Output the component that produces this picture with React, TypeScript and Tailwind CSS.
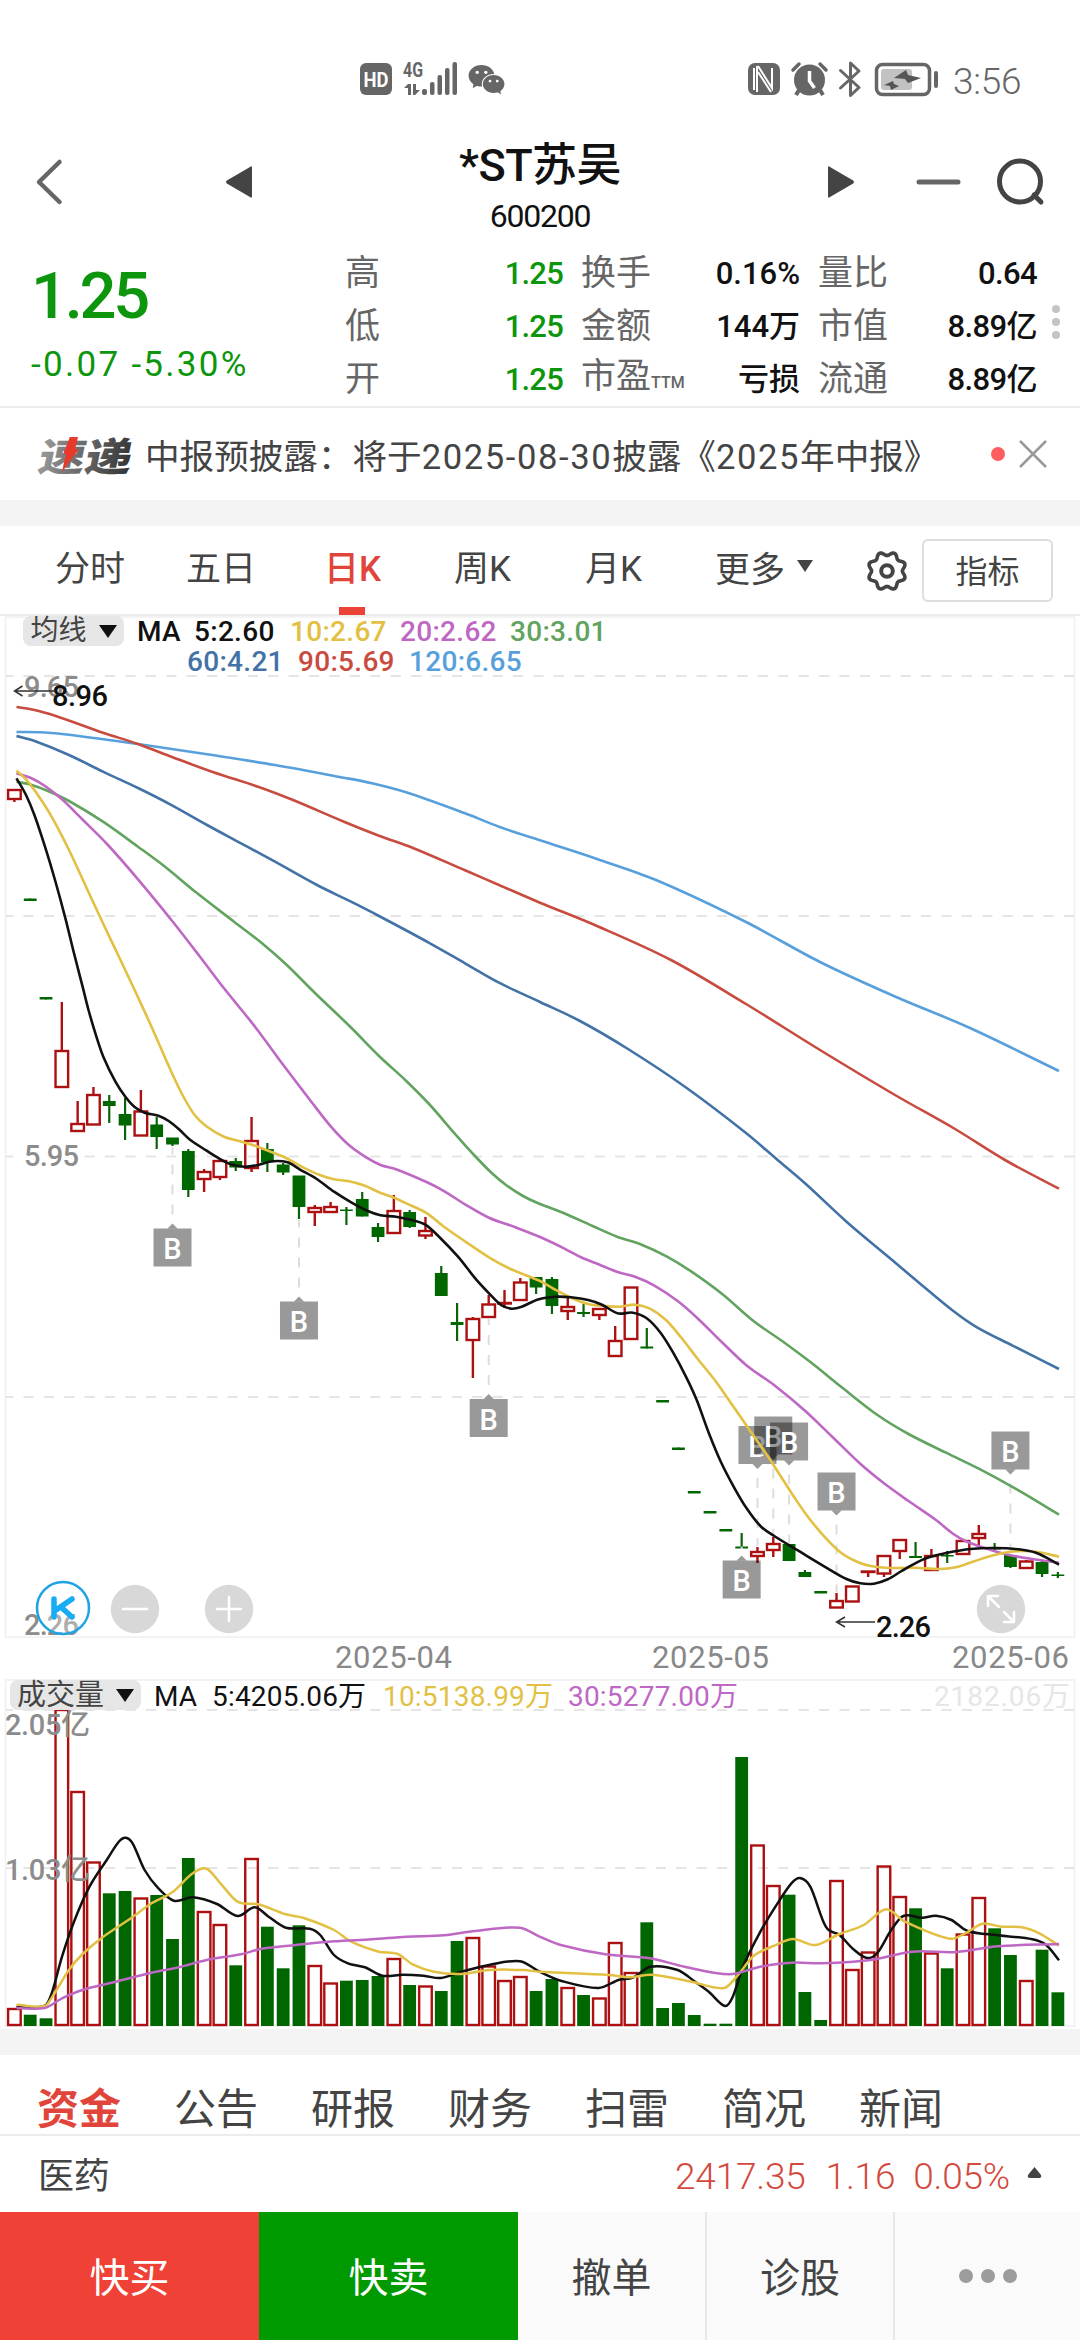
import React from 'react';
import { AiFillWechat } from 'react-icons/ai';

type Point = [number, number];
// [rising, high, bodyTop, bodyBottom, low]
type Candle = [boolean, number, number, number, number];

const STEP = 15.81;
const FIRST_X = 14.4;
const VOLUME_BOTTOM = 2026;

const centerX = (index: number) => FIRST_X + index * STEP;

const candles: Candle[] = [
  [true, 790, 790, 799, 802], [false, 898.5, 898.5, 901, 901], [false, 997, 997, 999.5, 999.5], [true, 1002, 1051, 1087, 1087],
  [true, 1101, 1124, 1131, 1131], [true, 1087, 1095, 1124.5, 1125], [false, 1095, 1101, 1106, 1123], [false, 1098, 1114, 1125.5, 1140],
  [true, 1090, 1111.5, 1135.5, 1136], [false, 1117, 1124.5, 1137, 1149], [false, 1138, 1137.5, 1144.5, 1146], [false, 1149, 1151, 1190, 1197],
  [true, 1169, 1172, 1179, 1192], [true, 1158, 1161, 1177, 1180], [false, 1158, 1161, 1167.5, 1171], [true, 1117, 1141, 1168, 1172],
  [false, 1143, 1149, 1162.5, 1172], [false, 1163, 1164.5, 1172.5, 1175], [false, 1176, 1175.5, 1207, 1219], [true, 1205, 1208, 1212, 1226],
  [true, 1202, 1207, 1212, 1213], [false, 1207, 1209.5, 1211, 1225], [false, 1192, 1199, 1216.5, 1216.5], [false, 1223, 1227, 1237, 1242],
  [true, 1195, 1211, 1233, 1233], [false, 1210, 1212, 1227, 1228], [true, 1217, 1231, 1235.5, 1239], [false, 1266, 1273, 1296, 1296],
  [false, 1303, 1322, 1325, 1341], [true, 1317, 1319, 1340, 1378], [true, 1295, 1304.5, 1317, 1317], [true, 1290, 1303, 1303.5, 1308],
  [true, 1278, 1282.5, 1300, 1300], [false, 1277, 1277, 1287.5, 1294], [false, 1277, 1279, 1306, 1314], [true, 1298, 1307, 1311, 1320],
  [false, 1304, 1312, 1314, 1317], [true, 1308, 1309, 1315, 1320], [true, 1326, 1341, 1356, 1356], [true, 1287, 1287.5, 1339, 1339],
  [false, 1328, 1346.5, 1348.5, 1348.5], [false, 1400, 1400, 1402.5, 1402], [false, 1447.5, 1447.5, 1450, 1450], [false, 1491, 1491, 1493.5, 1493],
  [false, 1511, 1511, 1513.5, 1513], [false, 1529, 1529, 1531.5, 1531], [false, 1533, 1546.5, 1548.5, 1548], [true, 1547, 1552, 1556, 1563],
  [true, 1537, 1544, 1550, 1557], [false, 1544, 1544, 1561, 1561], [false, 1570, 1572, 1577, 1577], [false, 1591, 1591, 1593.5, 1593],
  [true, 1593, 1601, 1607.5, 1608], [true, 1586, 1586.5, 1601.5, 1601], [true, 1571, 1571.5, 1572, 1577], [true, 1556, 1556, 1573.5, 1577],
  [true, 1540, 1540, 1551, 1559], [false, 1542, 1556, 1558, 1558], [true, 1549, 1556, 1570, 1570], [false, 1551, 1555, 1556.5, 1563],
  [true, 1541, 1541, 1554, 1554], [true, 1525, 1534, 1538, 1545], [false, 1543, 1547.5, 1549.5, 1550], [false, 1555, 1555, 1567, 1568],
  [true, 1560, 1561.5, 1568, 1568], [false, 1561, 1562, 1574, 1577], [false, 1572, 1574.5, 1576, 1578]
];

const volumeTops = [
  2009, 2014.7, 2018.3, 1710, 1792, 1862.5, 1893.3, 1891, 1898.5, 1895, 1939, 1858, 1912, 1925, 1965.3, 1859, 1926.7, 1968.3, 1925.3,
  1966, 1983.5, 1980.7, 1980, 1976, 1959, 1985, 1986.5, 1991, 1941, 1938, 1966.5, 1981, 1977, 1991, 1979, 1988, 1995, 1998.5, 1943,
  1973, 1922.3, 2008, 2003, 2015, 2023.7, 2023.7, 1757, 1845.5, 1886, 1894.7, 1992, 2020, 1881, 1970, 1952.5, 1866.5, 1897, 1908.3,
  1953.5, 1968.3, 1934.5, 1898, 1928.3, 1955, 1981, 1949.7, 1992.3
];

const priceLines: { color: string; points: Point[] }[] = [
  {
    color: '#58a0dc',
    points: [[16.5, 732], [41, 732.3], [69, 734.7], [138, 744], [207, 754.3], [275, 765], [344, 777.7], [372, 783.3], [406, 792.3], [465, 813.3], [499, 826.7], [540, 840.3], [597, 859], [656, 880], [746, 922], [820, 962], [895, 996.5], [970, 1028], [1059, 1071]]
  },
  {
    color: '#c84b40',
    points: [[16.5, 707], [31, 709.3], [55, 715.7], [103, 732.7], [138, 744], [172, 757], [213.5, 772.3], [258, 786.7], [293, 800], [344, 821.7], [379, 835.7], [413, 848], [465, 870.3], [499, 885], [540, 902.7], [597, 926], [671, 960], [746, 1004], [820, 1050], [895, 1095], [955, 1129], [1005, 1160], [1059, 1188.7]]
  },
  {
    color: '#4272a6',
    points: [[16.5, 736], [34, 740.7], [69, 755], [103, 771.7], [138, 788], [172, 805.3], [207, 825], [241, 843.3], [275, 861.7], [317, 885], [351, 901.7], [379, 916], [430, 943.3], [465, 963.3], [499, 982.7], [540, 1002], [580, 1021], [628, 1049], [686, 1087.5], [746, 1133], [777.6, 1160], [805, 1183.3], [846.5, 1221.7], [884, 1253.3], [919, 1282.7], [953, 1310.7], [977, 1327.3], [1012, 1345.3], [1059, 1369]]
  },
  {
    color: '#61a35f',
    points: [[16.5, 781.7], [31, 784.7], [48, 791], [69, 801], [103, 821.7], [138, 846.7], [165, 866.7], [196, 892.3], [234, 921.7], [262, 943.3], [286, 964.3], [317, 995], [351, 1027.5], [379, 1056], [406, 1080.7], [430, 1105], [454.5, 1133.3], [475, 1156], [492, 1173.3], [506, 1185], [523, 1196], [540, 1204], [561, 1212], [592, 1225.7], [617, 1236.7], [640, 1244], [667, 1256.7], [691.5, 1271.7], [722.5, 1294.3], [753.5, 1321], [784.5, 1342.7], [812, 1363.3], [843, 1388.3], [877.5, 1415], [908.5, 1434], [946, 1452.7], [984, 1471.3], [1019, 1490.7], [1059, 1514.7]]
  },
  {
    color: '#be68c4',
    points: [[16.5, 773.3], [31, 778], [45, 786], [62, 799.3], [83, 820], [107, 844], [138, 879.3], [172, 920.7], [200, 956.7], [224, 988.3], [255, 1026.7], [282, 1063.3], [310, 1100], [331, 1126.7], [348, 1144.3], [365, 1156.7], [380.5, 1165], [396, 1169.3], [427, 1182.3], [444, 1191], [465, 1204.3], [489, 1217.7], [516.5, 1227.7], [540, 1237], [564, 1248.3], [581, 1257.3], [598.5, 1264.3], [617.5, 1272], [635, 1276.7], [654, 1285.3], [678, 1301.3], [698, 1318.7], [722.5, 1342.7], [747, 1365.7], [774, 1385], [805, 1410.7], [833, 1437.5], [860, 1463.5], [884, 1483.3], [908.5, 1501], [936, 1520], [953, 1533.7], [967, 1541.7], [988, 1549], [1008, 1554.7], [1032, 1559], [1059, 1562.7]]
  },
  {
    color: '#e2c043',
    points: [[16.5, 770.7], [26, 779.3], [36, 792.3], [52, 817.3], [69, 850], [86, 886.7], [103, 923.3], [120.5, 960], [138, 997.3], [151.5, 1026.7], [172, 1073.3], [182.5, 1095], [194.6, 1115], [207, 1126.7], [224, 1136.7], [238, 1140.7], [255, 1145.7], [272, 1152.3], [286, 1158], [303, 1167.3], [320, 1175], [334, 1179.3], [348, 1181], [365, 1185.7], [379, 1192.3], [394, 1197.7], [410, 1205], [427, 1213.3], [444, 1226.7], [465, 1241.3], [489, 1257.3], [510, 1268.7], [540, 1281], [554, 1289], [571, 1297.7], [588, 1304], [605, 1306], [619, 1306.7], [635, 1304.7], [650, 1308.7], [666, 1320], [681, 1337.3], [698, 1359.3], [716, 1381.7], [733, 1406], [750, 1430.7], [767, 1455], [781, 1476.7], [795, 1498.3], [809, 1518.3], [826, 1538.3], [841, 1552.7], [857, 1561.7], [871, 1566], [891, 1568], [915, 1567.7], [939, 1569], [957, 1567], [974, 1561.3], [994.5, 1555], [1015, 1551.3], [1036, 1551.7], [1059, 1556.7]]
  },
  {
    color: '#111111',
    points: [[16.5, 778.3], [26, 795], [34.4, 815], [45, 846.7], [55, 880], [65.4, 918.3], [74, 953.3], [82.6, 986.7], [88.5, 1010], [96.4, 1036.7], [103.3, 1056.7], [115.4, 1081.7], [125.7, 1097.3], [134.3, 1106.7], [144.6, 1112.7], [158.4, 1115.7], [168.7, 1121], [179, 1129.3], [189.4, 1139.3], [206.6, 1150.7], [220.4, 1159.3], [230.7, 1164.3], [244.5, 1166.7], [258.3, 1165], [272, 1161.3], [287.5, 1162.3], [299.6, 1169.3], [316.8, 1179], [334, 1191.7], [351.2, 1202.3], [368.5, 1211.3], [380.5, 1215.3], [396, 1216.7], [411.5, 1220], [425.3, 1224.7], [439, 1236.7], [458, 1256.7], [475.2, 1278.3], [489, 1293.3], [501, 1305], [511.4, 1308.7], [521.7, 1306.7], [538, 1299.5], [555.5, 1296.7], [571, 1297.3], [588.2, 1300], [602, 1304.7], [617.5, 1313.3], [633, 1312.7], [646.7, 1318.3], [660.5, 1332.7], [672.6, 1351.7], [686.3, 1377.3], [696.7, 1400], [708.7, 1432.7], [720.8, 1461.7], [734.6, 1488.3], [746.6, 1508.3], [760.4, 1526], [774.2, 1536], [798.3, 1550.7], [825.8, 1567.3], [846.5, 1579], [860.3, 1583.3], [874, 1583.7], [887.8, 1579.3], [901.6, 1571], [917, 1562.3], [929, 1557.3], [946.3, 1553], [970.4, 1549], [994.5, 1548], [1018.7, 1549.3], [1035.9, 1552.7], [1049.6, 1559.3], [1059, 1564.7]]
  }
];

const volumeLines: { color: string; points: Point[] }[] = [
  {
    color: '#111111',
    points: [[16.5, 2006.7], [44.8, 2005.7], [51.7, 1993.3], [62, 1956.7], [74, 1921.7], [89.5, 1886.7], [106.7, 1860], [118.8, 1841.7], [125.7, 1837.7], [132.6, 1843.3], [144.6, 1870], [158.4, 1888.3], [173.9, 1900.7], [192.8, 1897.3], [217, 1904], [237.6, 1916], [254.8, 1907.3], [268.6, 1916.7], [285.8, 1927.7], [309.9, 1928.7], [320.2, 1935], [334, 1955], [347.8, 1963.3], [365, 1967.3], [382.2, 1975.7], [402.9, 1974.7], [423.6, 1975.7], [440.8, 1978], [461.4, 1971.7], [489, 1965], [520, 1961.3], [539.6, 1971.7], [560.7, 1980.7], [598.5, 1988], [619.2, 1979.7], [633, 1977.7], [650.2, 1966.7], [677.7, 1970], [695, 1981.7], [708.7, 1991.7], [725, 2006], [732.8, 1996.7], [743, 1966.7], [760.4, 1931.7], [777.6, 1903.3], [791.4, 1883.3], [800, 1878], [810.3, 1886.7], [825.8, 1926.7], [839.6, 1935], [853.4, 1949.3], [867, 1958], [877.5, 1952.7], [891.2, 1930], [903.3, 1916], [922.2, 1917.7], [936, 1915.7], [951.5, 1920], [967, 1930.7], [998, 1935.3], [1032.4, 1939.3], [1046.2, 1945], [1059, 1960.3]]
  },
  {
    color: '#e2c043',
    points: [[16.5, 2004.7], [44.8, 2006], [53.4, 1995], [68.9, 1970], [82.6, 1954], [103.3, 1936.7], [130.9, 1918.3], [151.5, 1903.3], [172.2, 1892.3], [192.8, 1873.3], [206.6, 1868.7], [220.4, 1883.3], [237.6, 1901.7], [258.3, 1904.3], [285.8, 1914.3], [303, 1917.7], [334, 1930], [351.2, 1941.7], [378.8, 1951.7], [397.7, 1954], [413.2, 1964.7], [433.9, 1971.7], [461.4, 1974], [489, 1970], [523.4, 1970], [539.6, 1971.7], [608.9, 1975], [629.5, 1977.3], [651.9, 1974.7], [691.5, 1981.7], [724.2, 1988], [738, 1975], [753.5, 1956], [774.2, 1945.7], [793, 1939], [815.5, 1945], [839.6, 1934], [863.7, 1925], [886, 1909.3], [905, 1921.7], [949.8, 1938.7], [967, 1932.3], [982.5, 1923.7], [1001.4, 1926.7], [1022, 1927.3], [1039.3, 1933.3], [1059, 1945.7]]
  },
  {
    color: '#be68c4',
    points: [[16.5, 2008], [44.8, 2008], [62, 1998.3], [82.6, 1990], [113.6, 1982.3], [151.5, 1972.7], [179, 1967.3], [206.6, 1960], [241, 1954.3], [261.7, 1948.7], [296, 1945], [334, 1941.3], [371.9, 1939.3], [406.3, 1936.7], [444.2, 1935.3], [475.2, 1931], [520, 1927.7], [539.6, 1936.7], [560.7, 1945], [605.4, 1954.3], [650.2, 1958.3], [684.6, 1966.7], [729.4, 1974.3], [760.4, 1966.7], [791.4, 1962.7], [822.4, 1963.3], [870.6, 1960], [911.9, 1951.7], [956.7, 1952], [998, 1946.3], [1059, 1944]]
  }
];

// index: candle, y: top of the square, anchor: where the dashed leader ends
const buyMarks = [
  { index: 10, y: 1228.5, anchor: 1147, below: true },
  { index: 18, y: 1301.5, anchor: 1220, below: true },
  { index: 30, y: 1399, anchor: 1318, below: true },
  { index: 46, y: 1560.5, anchor: 1549, below: true },
  { index: 47, y: 1426, anchor: 1546, below: false },
  { index: 48, y: 1416.5, anchor: 1536, below: false },
  { index: 49, y: 1422.5, anchor: 1543, below: false },
  { index: 52, y: 1472.5, anchor: 1592, below: false },
  { index: 63, y: 1431.5, anchor: 1554, below: false }
];

const smoothPath = (points: Point[]) => {
  let d = `M${points[0][0]} ${points[0][1]}`;
  for (let i = 0; i < points.length - 1; i++) {
    const p0 = points[i - 1] || points[i];
    const p1 = points[i];
    const p2 = points[i + 1];
    const p3 = points[i + 2] || p2;
    // handles are limited to the x distance so uneven spacing does not overshoot
    const dx = (p2[0] - p1[0]) / 3;
    const m1 = (p2[1] - p0[1]) / (p2[0] - p0[0]);
    const m2 = (p3[1] - p1[1]) / (p3[0] - p1[0]);
    d += `C${p1[0] + dx} ${p1[1] + m1 * dx} ${p2[0] - dx} ${p2[1] - m2 * dx} ${p2[0]} ${p2[1]}`;
  }
  return d;
};

// eight soft teeth with the valleys on the axes
const gearPath = () => {
  const steps = 96;
  const parts: string[] = [];
  for (let i = 0; i < steps; i++) {
    const angle = (i / steps) * Math.PI * 2;
    const r = 17.3 - 1.9 * Math.cos(8 * angle);
    parts.push(`${(r * Math.cos(angle)).toFixed(2)} ${(r * Math.sin(angle)).toFixed(2)}`);
  }
  return `M${parts.join('L')}Z`;
};

const StatusBar: React.FC = () => (
  <div className="h-[130px] pt-[58px] flex items-start text-[#666]">
    <svg className="ml-[356px] shrink-0" width="108" height="44" viewBox="356 58 108 44" fill="#666">
      <rect x="360" y="63" width="32" height="32" rx="6" />
      <text x="363.500" y="87" fontSize="21" fontWeight="700" textLength="25" lengthAdjust="spacingAndGlyphs" fill="#fff">HD</text>
      <text x="403" y="77" fontSize="20" fontWeight="700" textLength="20" lengthAdjust="spacingAndGlyphs">4G</text>
      <path d="M408 84h3v11h-3v-7h-4zM413 84h3v6h4l-5 5h-2z" />
      <rect x="422" y="89" width="5" height="6" rx="2" />
      <rect x="430" y="82" width="4.500" height="13" rx="2" />
      <rect x="437.500" y="75" width="4.500" height="20" rx="2" />
      <rect x="445" y="68" width="4.500" height="27" rx="2" />
      <rect x="452.500" y="62" width="4.500" height="33" rx="2" />
    </svg>
    <AiFillWechat className="mt-[1px] ml-[2px]" size={41} />
    <svg className="ml-[236px] shrink-0" width="200" height="44" viewBox="742 58 200 44" fill="#666">
      <rect x="747" y="63" width="32" height="32" rx="7" />
      <path d="M753 68v22M756 66v26M757 66l14 22V68M757 72l13 20" fill="none" stroke="#fff" strokeWidth="2" />
      <circle cx="808.500" cy="80" r="15.500" />
      <path d="M792 70l6-6M825 70l-6-6" stroke="#666" strokeWidth="3.500" strokeLinecap="round" />
      <path d="M798 90l-3 5M819 90l3 5" stroke="#666" strokeWidth="4" />
      <path d="M808.500 71v10l5 7" fill="none" stroke="#fff" strokeWidth="3.500" />
      <path d="M839.500 70.500l18.500 17-8.500 8V63l8.500 8-18.500 17" fill="none" stroke="#666" strokeWidth="3" strokeLinejoin="round" strokeLinecap="round" />
      <rect x="875.500" y="64.500" width="53" height="30" rx="6" fill="none" stroke="#666" strokeWidth="3.500" />
      <rect x="880" y="69" width="31" height="21" rx="3" fill="#c2c2c2" />
      <path d="M893 78l12-8 2 5 13 3-13 5-3-4zM883 85l9-4 1 3 5 2-8 4-1-4z" fill="#555" />
      <rect x="933" y="71" width="4" height="17" rx="2" />
    </svg>
    <span className="ml-2.5 mt-[2px] text-[37px] leading-[44px] font-light tracking-[-0.300px]">3:56</span>
  </div>
);

const Header: React.FC = () => (
  <header className="h-[120px] flex items-start justify-between pl-[34px] pr-[34px]">
    <div className="flex w-[221px] justify-between pt-[28px]">
      <svg width="30" height="48" viewBox="0 0 30 48"><path d="M25.500 4L5 24l20.500 20" fill="none" stroke="#666" strokeWidth="4.500" strokeLinecap="round" strokeLinejoin="round" /></svg>
      <svg className="mt-1" width="30" height="40" viewBox="0 0 30 40"><path d="M27 5.500v29q0 2-2 .5L1.800 21.500q-1.800-1.500 0-3L25 5q2-1.500 2 .5z" fill="#444" /></svg>
    </div>
    <div className="flex flex-col items-center w-[300px]">
      <h1 className="mt-[3px] text-[45px] leading-[66px] font-medium tracking-[-0.500px] text-[#111] whitespace-nowrap">*ST苏吴</h1>
      <span className="-mt-[2px] text-[32px] leading-[38px] tracking-[-1.200px] text-[#111]">600200</span>
    </div>
    <div className="flex w-[221px] pt-[28px]">
      <svg className="mt-1" width="30" height="40" viewBox="0 0 30 40"><path d="M3 5.500v29q0 2 2 .5l23.200-13.500q1.800-1.500 0-3L5 5q-2-1.500-2 .5z" fill="#444" /></svg>
      <svg className="ml-[59px]" width="52" height="48" viewBox="0 0 52 48"><path d="M5 24h39" stroke="#666" strokeWidth="5" strokeLinecap="round" /></svg>
      <svg className="ml-auto" width="52" height="48" viewBox="0 0 52 48">
        <circle cx="26" cy="23.500" r="20.500" fill="none" stroke="#444" strokeWidth="5" />
        <path d="M40 37l7 7" stroke="#444" strokeWidth="5" strokeLinecap="round" />
      </svg>
    </div>
  </header>
);

const quoteColumns = [
  {
    width: 'w-[218px]',
    valueStyle: 'text-[#0d960d] tracking-[-0.800px]',
    rows: [['高', '1.25'], ['低', '1.25'], ['开', '1.25']]
  },
  {
    width: 'w-[219px]',
    valueStyle: 'text-[#111]',
    rows: [['换手', '0.16%'], ['金额', '144万'], ['市盈', '亏损']]
  },
  {
    width: 'w-[219px]',
    valueStyle: 'text-[#111] tracking-[-0.600px]',
    rows: [['量比', '0.64'], ['市值', '8.89亿'], ['流通', '8.89亿']]
  }
];

const Quote: React.FC = () => (
  <section className="h-[158px] flex border-b-2 border-[#ebebeb] text-[#0d960d]">
    <div className="w-[345px] pl-[31px]">
      <p className="mt-[7px] text-[65px] leading-[78px] font-medium tracking-[-3.200px]">1.25</p>
      <p className="mt-[9px] text-[35px] leading-[42px] tracking-[2.300px] whitespace-nowrap">-0.07 -5.30%</p>
    </div>
    <div className="flex gap-[18px]">
      {quoteColumns.map((column) => (
        <div key={column.rows[0][0]} className={`${column.width} flex flex-col -mt-[3px]`}>
          {column.rows.map(([label, value]) => (
            <div key={label} className="h-[53px] flex items-center justify-between whitespace-nowrap">
              <span className="text-[35px] leading-[53px] text-[#666]">
                {label}
                {label === '市盈' && <small className="text-[16px] font-medium">TTM</small>}
              </span>
              <span className={`text-[31px] leading-[53px] font-medium ${column.valueStyle}`}>{value}</span>
            </div>
          ))}
        </div>
      ))}
    </div>
    <div className="ml-[15px] mt-[55px] flex flex-col gap-[5px]">
      <i className="size-2 rounded-full bg-[#c4c4c4]" />
      <i className="size-2 rounded-full bg-[#c4c4c4]" />
      <i className="size-2 rounded-full bg-[#c4c4c4]" />
    </div>
  </section>
);

const Notice: React.FC = () => (
  <section className="h-[92px] flex items-center pl-[30px] text-[#444]">
    <svg className="shrink-0" width="110" height="64" viewBox="0 0 110 64">
      <defs>
        <linearGradient id="express" x1="0" x2="1">
          <stop offset="0" stopColor="#999" />
          <stop offset="1" stopColor="#333" />
        </linearGradient>
      </defs>
      <text x="15" y="50" fontSize="42" fontWeight="900" fill="url(#express)" textLength="93" lengthAdjust="spacingAndGlyphs" transform="skewX(-12) translate(2 3) scale(1 0.930)">速递</text>
      <path d="M40 15h8l-3 12h4L32 50l4-18h-3z" fill="#e8392d" />
    </svg>
    <p className="ml-[5px] mt-[6px] w-[806px] text-[34.600px] leading-[48px] whitespace-nowrap">
      中报预披露：将于<span className="tracking-[1.600px]">2025-08-30</span>披露《<span className="tracking-[1.600px]">2025</span>年中报》
    </p>
    <i className="ml-[40px] size-3.5 rounded-full bg-[#ff5e5e] shrink-0" />
    <svg className="ml-[12px]" width="32" height="32" viewBox="0 0 32 32"><path d="M3 3l26 26M29 3L3 29" stroke="#999" strokeWidth="2.500" /></svg>
  </section>
);

const periods = [
  { label: '分时', width: 'w-[131px]' },
  { label: '五日', width: 'w-[138px]' },
  { label: '日K', width: 'w-[130px]' },
  { label: '周K', width: 'w-[131px]' },
  { label: '月K', width: 'w-[130px]' }
];

const PeriodTabs: React.FC = () => (
  <nav className="h-[90px] flex border-b-2 border-[#ececec] pl-[55px] text-[35px] leading-[88px] text-[#444]">
    {periods.map((period) => (
      <div key={period.label} className={`${period.width} h-[89px]`}>
        {period.label === '日K' ? (
          <span className="relative inline-block font-medium text-[#e0443a]">
            日K
            <i className="absolute left-1/2 -translate-x-1/2 -ml-px top-[81px] w-[26px] h-[8px] bg-[#ea4335]" />
          </span>
        ) : period.label}
      </div>
    ))}
    <div className="flex items-center h-[90px] w-[148px]">
      更多
      <svg className="ml-[11px] -mt-[10px]" width="18" height="14" viewBox="0 0 18 14"><path d="M1 1h16L9 13z" fill="#444" /></svg>
    </div>
    <svg className="mt-[21px]" width="48" height="48" viewBox="-24 -24 48 48" fill="none" stroke="#444" strokeWidth="3.600" strokeLinejoin="round">
      <path d={gearPath()} />
      <circle r="5.800" strokeWidth="4" />
    </svg>
    <button type="button" className="ml-[11px] mt-[13px] w-[131px] h-[63px] border-2 border-[#ddd] rounded-md text-[32px] leading-[62px]">指标</button>
  </nav>
);

const BuyMark: React.FC<{ mark: (typeof buyMarks)[number] }> = ({ mark }) => {
  const x = centerX(mark.index);
  const bottom = mark.y + 38;
  return (
    <g>
      <path d={mark.below ? `M${x} ${mark.y - 14}V${mark.anchor}` : `M${x} ${bottom + 14}V${mark.anchor}`} stroke="#ddd" strokeWidth="2" strokeDasharray="10 10" />
      <g fill="#000" fillOpacity="0.4">
        <rect x={x - 19} y={mark.y} width="38" height="38" />
        <path d={mark.below ? `M${x - 5} ${mark.y}l5-5l5 5z` : `M${x - 5} ${bottom}l5 5l5-5z`} />
      </g>
      <text x={x} y={mark.y + 30.500} fontSize="29" fontWeight="500" fill="#fff" textAnchor="middle">B</text>
    </g>
  );
};

const RoundButton: React.FC<{ x: number; path: string }> = ({ x, path }) => (
  <g transform={`translate(${x} 1609)`}>
    <circle r="24.200" fill="#d8d8d8" />
    <path d={path} fill="none" stroke="#fff" strokeWidth="2.500" strokeLinecap="round" strokeLinejoin="round" />
  </g>
);

const PriceChart: React.FC = () => (
  <section className="relative h-[1063px]">
    <svg className="absolute inset-0" width="1080" height="1063" viewBox="0 616 1080 1063">
      <rect x="5.500" y="617" width="1069" height="1020" fill="none" stroke="#f0f0f0" strokeWidth="1.500" />
      {[676, 916, 1156.5, 1397].map((y) => (
        <path key={y} d={`M6 ${y}H1074`} stroke="#e5e5e5" strokeWidth="2" strokeDasharray="10.200 10.200" strokeDashoffset="3" />
      ))}
      <g fontSize="29" fontWeight="500" fill="#8c8c8c">
        <rect x="22" y="1144" width="62" height="24" fill="#fff" />
        <text x="24" y="697" textLength="55">9.65</text>
        <text x="24" y="1166" textLength="55">5.95</text>
        <text x="24" y="1634.500" textLength="55">2.26</text>
      </g>
      {candles.map(([rising, high, top, bottom, low], index) => {
        const x = centerX(index);
        return rising ? (
          <g key={index} stroke="#ac1010" strokeWidth="2.400" fill="none">
            <path d={`M${x} ${high}V${top}M${x} ${bottom}V${low}`} />
            <rect x={x - 6.300} y={top} width="12.600" height={bottom - top} />
          </g>
        ) : (
          <g key={index} stroke="#0a620a" strokeWidth="2.200" fill="#006600">
            <path d={`M${x} ${high}V${low}`} />
            <rect x={x - 6.400} y={top} width="12.800" height={bottom - top} stroke="none" />
          </g>
        );
      })}
      {buyMarks.map((mark) => <BuyMark key={mark.index} mark={mark} />)}
      {priceLines.map((line) => (
        <path key={line.color} d={smoothPath(line.points)} fill="none" stroke={line.color} strokeWidth="2.600" />
      ))}
      <g fill="none" stroke="#333" strokeWidth="1.500">
        <path d="M54 691H14.500M22.500 686l-8 5l8 5" />
        <path d="M875 1622H836.500M845 1617l-8.500 5l8.500 5" />
      </g>
      <text x="52" y="706" fontSize="29" fontWeight="500" fill="#111" textLength="56">8.96</text>
      <text x="876" y="1637" fontSize="29" fontWeight="500" fill="#111" textLength="55">2.26</text>
      <circle cx="63" cy="1608" r="26" fill="#fff" fillOpacity="0.300" stroke="#1fa3e3" strokeWidth="2.500" />
      <path d="M54 1599v18M72 1599l-16 11M61 1607l11 10" fill="none" stroke="#17adf5" strokeWidth="5.500" strokeLinecap="round" />
      <RoundButton x={135} path="M-12 0H12" />
      <RoundButton x={229} path="M-12 0H12M0-12V12" />
      <RoundButton x={1001} path="M-13-3V-13H-3M-13-13L-2-2M13 3V13H3M13 13L3 3" />
      <g fontSize="31" fill="#888">
        <text x="335" y="1668" textLength="117">2025-04</text>
        <text x="652" y="1668" textLength="117">2025-05</text>
        <text x="952" y="1668" textLength="117">2025-06</text>
      </g>
    </svg>
    <div className="relative pt-px flex items-start text-[28px] leading-[30px] font-medium whitespace-nowrap tracking-[0.300px]">
      <div className="-mt-px ml-[23px] w-[101px] h-[30px] flex items-center justify-center gap-[12px] rounded-lg bg-[#e6e6e6] text-[#444] font-normal tracking-normal">
        均线
        <svg width="18" height="13" viewBox="0 0 18 13"><path d="M0 0h18L9 13z" fill="#111" /></svg>
      </div>
      <span className="ml-[13px] w-[57px] text-[#111]">MA</span>
      <span className="w-[96px] text-[#111]">5:2.60</span>
      <span className="w-[110px] text-[#e2c043]">10:2.67</span>
      <span className="w-[110px] text-[#be68c4]">20:2.62</span>
      <span className="text-[#61a35f]">30:3.01</span>
    </div>
    <div className="relative flex pl-[187px] text-[28px] leading-[30px] font-medium whitespace-nowrap tracking-[0.300px]">
      <span className="w-[111px] text-[#4272a6]">60:4.21</span>
      <span className="w-[111px] text-[#c84b40]">90:5.69</span>
      <span className="text-[#58a0dc]">120:6.65</span>
    </div>
  </section>
);

const VolumeChart: React.FC = () => (
  <section className="relative h-[350px]">
    <svg className="absolute inset-0" width="1080" height="350" viewBox="0 1679 1080 350">
      <rect x="5.500" y="1680" width="1069" height="346" fill="none" stroke="#f0f0f0" strokeWidth="1.500" />
      {[1710, 1868].map((y) => (
        <path key={y} d={`M6 ${y}H1074`} stroke="#e5e5e5" strokeWidth="2" strokeDasharray="10.200 10.200" strokeDashoffset="3" />
      ))}
      {volumeTops.map((top, index) => {
        const x = centerX(index);
        return candles[index][0] ? (
          <rect key={index} x={x - 6.300} y={top} width="12.600" height={VOLUME_BOTTOM - 1 - top} fill="none" stroke="#ac1010" strokeWidth="2.400" />
        ) : (
          <rect key={index} x={x - 6.400} y={top} width="12.800" height={VOLUME_BOTTOM - top} fill="#006600" />
        );
      })}
      {volumeLines.map((line) => (
        <path key={line.color} d={smoothPath(line.points)} fill="none" stroke={line.color} strokeWidth="2.500" />
      ))}
      <g fontSize="29" fontWeight="500" fill="#8c8c8c">
        <text x="5" y="1735" textLength="85">2.05亿</text>
        <text x="5" y="1880" textLength="85">1.03亿</text>
      </g>
    </svg>
    <div className="relative pt-px flex items-start text-[28px] leading-[33px] whitespace-nowrap">
      <div className="ml-[10px] w-[131px] h-[30px] flex items-center justify-center gap-[12px] rounded-lg bg-[#e6e6e6] text-[29px] text-[#444]">
        成交量
        <svg width="18" height="13" viewBox="0 0 18 13"><path d="M0 0h18L9 13z" fill="#111" /></svg>
      </div>
      <span className="ml-[13px] w-[58px] text-[#111]">MA</span>
      <span className="w-[171px] text-[#111] tracking-[0.200px]">5:4205.06万</span>
      <span className="w-[185px] text-[#e2c043] tracking-[0.200px]">10:5138.99万</span>
      <span className="text-[#be68c4] tracking-[0.200px]">30:5277.00万</span>
      <span className="ml-auto mr-[9px] text-[#e6e6e6] tracking-[0.900px]">2182.06万</span>
    </div>
  </section>
);

const infoTabs = ['资金', '公告', '研报', '财务', '扫雷', '简况', '新闻'];

const App: React.FC = () => (
  <div className="w-[1080px] h-[2340px] overflow-hidden bg-white flex flex-col [&>*]:shrink-0 font-[Roboto,'Noto_Sans_CJK_SC',sans-serif]">
    <StatusBar />
    <Header />
    <Quote />
    <Notice />
    <div className="h-[26px] bg-[#f4f4f4]" />
    <PeriodTabs />
    <PriceChart />
    <VolumeChart />
    <div className="h-[26px] bg-[#f4f4f4]" />
    <nav className="h-[81px] flex gap-[53px] border-b-2 border-[#ececec] pl-[37px] text-[42px] leading-[110px] text-[#444]">
      {infoTabs.map((tab, index) => (
        <span key={tab} className={index === 0 ? 'font-bold text-[#e0443a]' : ''}>{tab}</span>
      ))}
    </nav>
    <div className="h-[76px] pt-[5px] flex items-center pl-[38px] pr-[38px] text-[37px] text-[#d3493f] font-light tracking-[-0.200px]">
      <span className="text-[36px] text-[#444] font-normal">医药</span>
      <span className="ml-auto">2417.35</span>
      <span className="ml-[20px]">1.16</span>
      <span className="ml-[18px]">0.05%</span>
      <svg className="ml-[17px] -mt-[7px]" width="15" height="12" viewBox="0 0 15 12"><path d="M7.500 0L14 8q1 3-2 3H3Q0 11 1 8z" fill="#444" /></svg>
    </div>
    <footer className="h-[128px] flex bg-[#fafafa] text-[40px] leading-[134px] text-center text-[#444]">
      <button type="button" className="w-[259px] bg-[#ef4136] text-white">快买</button>
      <button type="button" className="w-[259px] bg-[#009900] text-white">快卖</button>
      <button type="button" className="w-[189px] border-r-2 border-[#e6e6ee]">撤单</button>
      <button type="button" className="w-[188px] border-r-2 border-[#e6e6ee]">诊股</button>
      <div className="flex-1 flex items-center justify-center gap-[8px]">
        <i className="size-3.5 rounded-full bg-[#9c9c9c]" />
        <i className="size-3.5 rounded-full bg-[#9c9c9c]" />
        <i className="size-3.5 rounded-full bg-[#9c9c9c]" />
      </div>
    </footer>
  </div>
);

export default App;
